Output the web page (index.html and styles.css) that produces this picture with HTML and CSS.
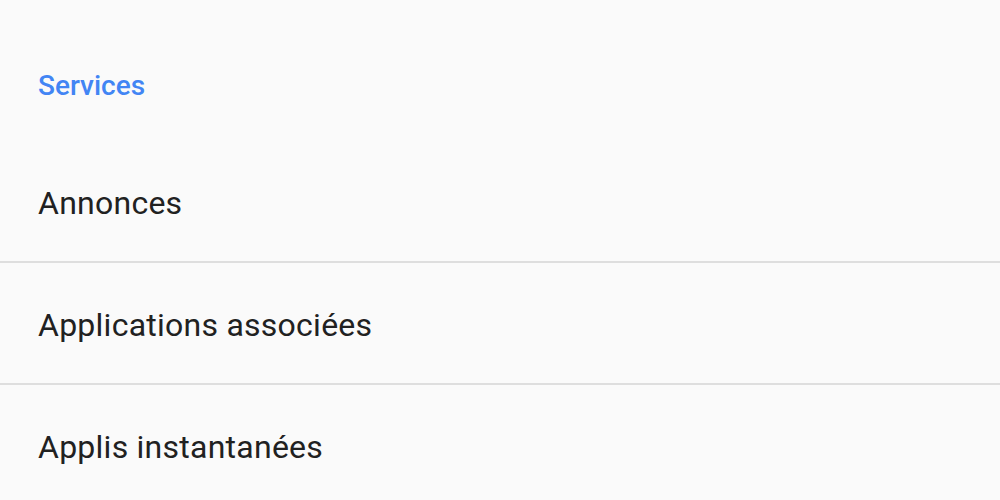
FILE: index.html
```html
<!DOCTYPE html>
<html lang="fr">
<head>
    <title>Services</title>
    <link rel="stylesheet" href="styles.css">
</head>
<body>

    <div class="settings">
        <div class="category">Services</div>

        <div class="item">Annonces</div>
        <div class="item">Applications associées</div>
        <div class="item">Applis instantanées</div>
    </div>

</body>
</html>
```
FILE: styles.css
```css
body {
    margin: 0;
    background-color: #fafafa;
    font-family: Roboto, "Noto Sans", sans-serif;
    overflow: hidden;
}

.settings {
    display: flex;
    flex-direction: column;
}

.category {
    box-sizing: border-box;
    height: 141px;
    padding: 66px 38px 0;
    line-height: 40px;
    font-size: 28px;
    font-weight: 500;
    color: #4285f4;
}

.item {
    display: flex;
    align-items: center;
    height: 116px;
    padding: 4px 38px 0;
    font-size: 32px;
    letter-spacing: 0.25px;
    color: #212121;
    border-bottom: 2px solid #dedede;
}

.item:last-child {
    border-bottom: none;
}
```
